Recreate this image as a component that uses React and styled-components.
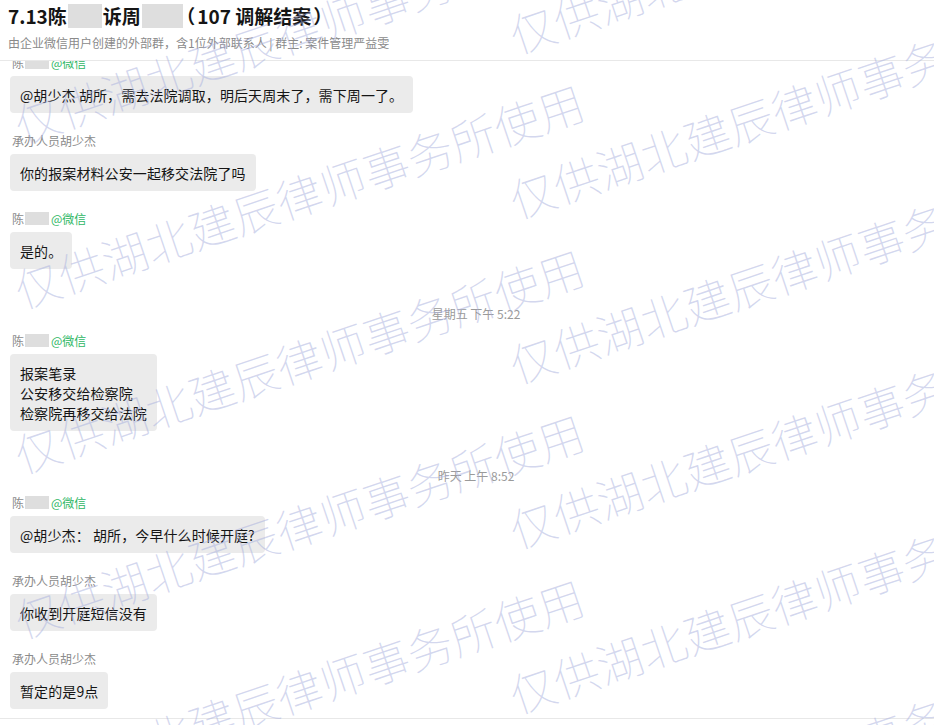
import React from 'react';
import styled, { createGlobalStyle } from 'styled-components';

const GlobalStyle = createGlobalStyle`
  html, body {
    margin: 0;
    padding: 0;
    background: #ffffff;
  }
  body {
    font-family: "Noto Sans CJK SC", "Noto Sans", "Liberation Sans", sans-serif;
    color: #1f1f1f;
  }
`;

const Page = styled.div`
  position: relative;
  width: 934px;
  height: 725px;
  overflow: hidden;
  background: #fff;
`;

const Header = styled.header`
  height: 61px;
  box-sizing: border-box;
  padding: 4px 8px 0;
  border-bottom: 1px solid #e8e8e8;
`;

const Title = styled.h1`
  margin: 0;
  display: flex;
  align-items: center;
  font-size: 19px;
  line-height: 24px;
  font-weight: 700;
  color: #151515;
`;

const Paren = styled.span`
  font-feature-settings: "halt";
  margin: 0 2px;
`;

const Redact = styled.span`
  display: inline-block;
  width: ${p => p.$w}px;
  height: ${p => p.$h}px;
  background: #dedede;
  margin: 0 1px;
`;

const Subtitle = styled.div`
  margin-top: 6px;
  font-size: 12px;
  line-height: 17px;
  color: #8a8a8a;
`;

const ChatArea = styled.section`
  height: 657px;
  overflow: hidden;
  border-bottom: 1px solid #e8e8e8;
`;

const ChatList = styled.div`
  display: flex;
  flex-direction: column;
  align-items: flex-start;
  padding: 0 10px;
  margin-top: -8px;
`;

const Message = styled.div`
  display: flex;
  flex-direction: column;
  align-items: flex-start;
  margin-bottom: 18px;
`;

const Sender = styled.div`
  display: flex;
  align-items: center;
  padding-left: 2px;
  height: 18px;
  margin-bottom: 5px;
  font-size: 12px;
  color: #8c8c8c;
`;

const Wechat = styled.span`
  color: #2fb765;
  margin-left: 1px;
`;

const Bubble = styled.div`
  background: #ebebeb;
  border-radius: 4px;
  padding: 9px 10px 8px;
  font-size: 14px;
  line-height: 20px;
  letter-spacing: 0.1px;
  color: #151515;
  white-space: pre-line;
`;

const Stamp = styled.div`
  align-self: stretch;
  text-align: center;
  padding-left: 18px;
  margin: 18px 0 9px;
  font-size: 12px;
  line-height: 17px;
  color: #9a9a9a;
`;

const Watermarks = styled.div`
  position: absolute;
  inset: 0;
  pointer-events: none;
  overflow: hidden;
`;

const Mark = styled.span`
  position: absolute;
  font-size: 46px;
  line-height: 46px;
  font-weight: 100;
  white-space: nowrap;
  color: rgba(168, 176, 222, 0.5);
  transform: rotate(-18.7deg);
  transform-origin: 23px 23px;
`;

const MARK_TEXT = '仅供湖北建辰律师事务所使用';

const markSpots = [];
[[14, 118], [509, 28]].forEach(([x, y0]) => {
  for (let r = -1; r < 6; r++) markSpots.push({ x, y: y0 + r * 165 });
});

const ChenWechat = () => (
  <Sender>
    陈<Redact $w={24} $h={13} />
    <Wechat>@微信</Wechat>
  </Sender>
);

const Staff = () => <Sender>承办人员胡少杰</Sender>;

const messages = [
  { type: 'msg', who: 'chen', text: '@胡少杰 胡所，需去法院调取，明后天周末了，需下周一了。' },
  { type: 'msg', who: 'staff', text: '你的报案材料公安一起移交法院了吗' },
  { type: 'msg', who: 'chen', text: '是的。' },
  { type: 'time', text: '星期五 下午 5:22' },
  { type: 'msg', who: 'chen', text: '报案笔录\n公安移交给检察院\n检察院再移交给法院' },
  { type: 'time', text: '昨天 上午 8:52' },
  { type: 'msg', who: 'chen', text: '@胡少杰： 胡所，今早什么时候开庭?' },
  { type: 'msg', who: 'staff', text: '你收到开庭短信没有' },
  { type: 'msg', who: 'staff', text: '暂定的是9点' },
];

export default function App() {
  return (
    <Page>
      <GlobalStyle />
      <Header>
        <Title>
          7.13陈<Redact $w={34} $h={24} />诉周<Redact $w={41} $h={24} />
          <Paren>（</Paren>107 调解结案<Paren>）</Paren>
        </Title>
        <Subtitle>由企业微信用户创建的外部群，含1位外部联系人 | 群主: 案件管理严益雯</Subtitle>
      </Header>

      <ChatArea>
        <ChatList>
          {messages.map((m, i) =>
            m.type === 'time' ? (
              <Stamp key={i}>{m.text}</Stamp>
            ) : (
              <Message key={i}>
                {m.who === 'chen' ? <ChenWechat /> : <Staff />}
                <Bubble>{m.text}</Bubble>
              </Message>
            )
          )}
        </ChatList>
      </ChatArea>

      <Watermarks>
        {markSpots.map((s, i) => (
          <Mark key={i} style={{ left: s.x, top: s.y - 23 }}>
            {MARK_TEXT}
          </Mark>
        ))}
      </Watermarks>
    </Page>
  );
}
